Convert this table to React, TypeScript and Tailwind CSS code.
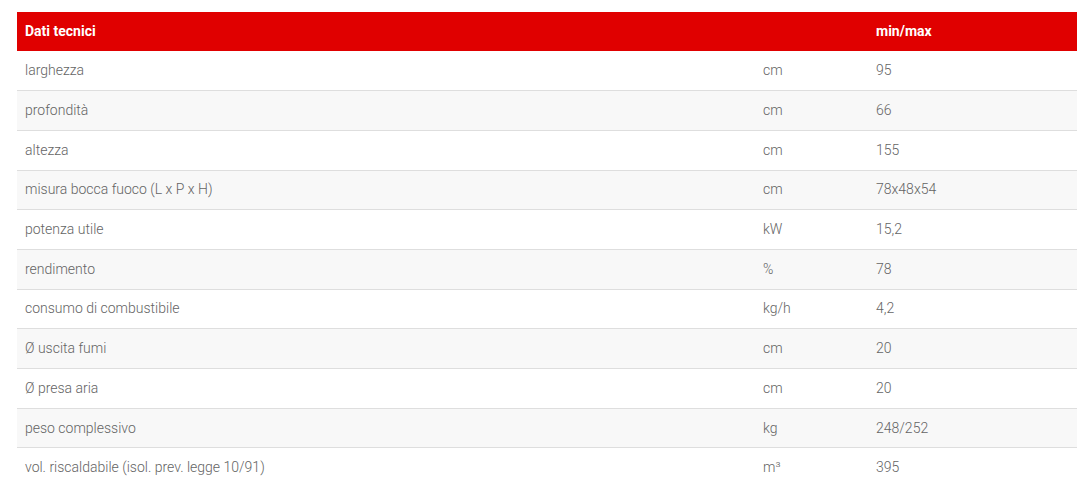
import React from 'react';

const rows: [string, string, string][] = [
  ['larghezza', 'cm', '95'],
  ['profondità', 'cm', '66'],
  ['altezza', 'cm', '155'],
  ['misura bocca fuoco (L x P x H)', 'cm', '78x48x54'],
  ['potenza utile', 'kW', '15,2'],
  ['rendimento', '%', '78'],
  ['consumo di combustibile', 'kg/h', '4,2'],
  ['Ø uscita fumi', 'cm', '20'],
  ['Ø presa aria', 'cm', '20'],
  ['peso complessivo', 'kg', '248/252'],
  ['vol. riscaldabile (isol. prev. legge 10/91)', 'm³', '395'],
];

export default function App() {
  return (
    <div className="bg-white min-h-[500px] pt-[12px] pl-[17px] pr-[14px]" style={{ fontFamily: 'Roboto, "Liberation Sans", sans-serif' }}>
      <table className="w-full border-collapse table-fixed text-[14px]">
        <colgroup>
          <col className="w-[738px]" />
          <col className="w-[113px]" />
          <col />
        </colgroup>
        <thead>
          <tr className="bg-[#e00000] text-white text-[14px] h-[39px]">
            <th className="text-left px-2 font-bold">Dati tecnici</th>
            <th className="text-left px-2"></th>
            <th className="text-left px-2 font-bold">min/max</th>
          </tr>
        </thead>
        <tbody>
          {rows.map(([label, unit, value], i) => (
            <tr
              key={label}
              className={`h-[39.7px] text-[#646464] font-light ${i % 2 === 1 ? 'bg-[#f8f8f8]' : 'bg-white'} ${i < rows.length - 1 ? 'border-b border-[#dedede]' : ''}`}
            >
              <td className="px-2">{label}</td>
              <td className="px-2">{unit}</td>
              <td className="px-2">{value}</td>
            </tr>
          ))}
        </tbody>
      </table>
    </div>
  );
}
